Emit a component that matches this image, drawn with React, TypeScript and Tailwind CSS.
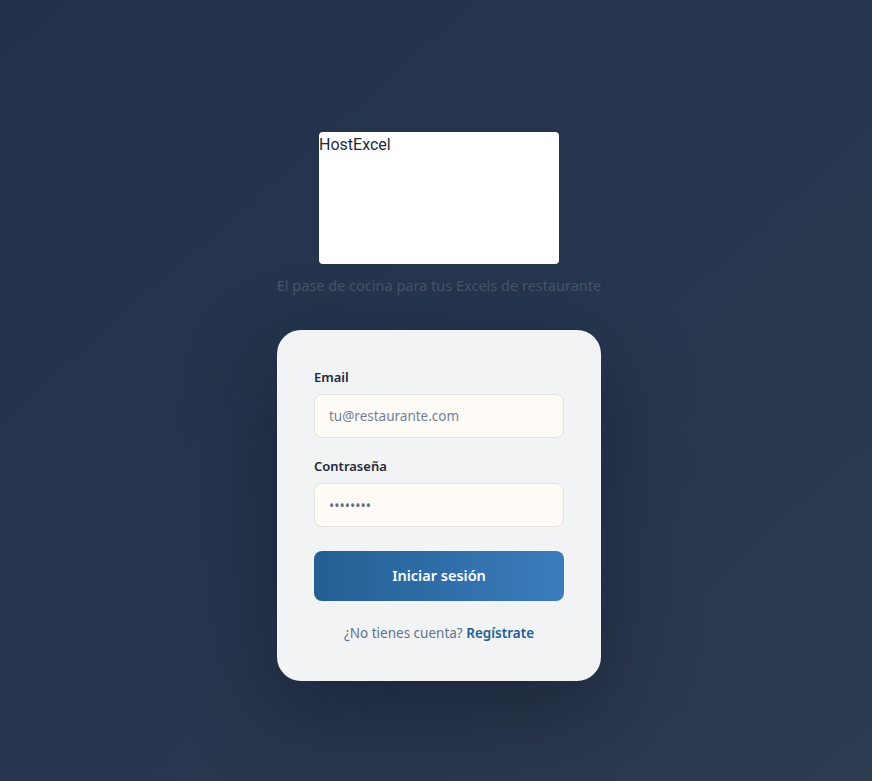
export default function App() {
  return (
    <div
      className="min-h-screen w-full bg-linear-to-br from-[#21324a] via-[#26364f] to-[#2e3a4e] flex flex-col items-center pt-[132px] pb-[100px] pl-[6px]"
      style={{ fontFamily: "'Noto Sans', Roboto, sans-serif" }}
    >
      {/* logo placeholder */}
      <div className="w-[240px] h-[132px] bg-white rounded-[4px] text-[16px] leading-[26px] text-[#1e293b] font-[Roboto,sans-serif]">
        HostExcel
      </div>
      <p className="mt-[11px] text-[14.5px] leading-5 text-[#475569]">
        El pase de cocina para tus Excels de restaurante
      </p>

      {/* login card */}
      <div className="mt-[35px] w-[324px] rounded-[24px] bg-[#f1f3f5] px-[37px] pt-[37px] pb-[38px] shadow-[0_30px_90px_rgba(10,18,30,0.45)]">
        <form className="flex flex-col" onSubmit={(e) => e.preventDefault()}>
          <label className="text-[13px] leading-5 font-semibold text-[#1e293b]">Email</label>
          <input
            type="email"
            placeholder="tu@restaurante.com"
            className="mt-[7px] h-[44px] w-full rounded-lg border border-[#e6e2dc] bg-[#fffcf7] px-[14px] text-[13.5px] text-[#1e293b] placeholder:text-[#718096] outline-none"
          />

          <label className="mt-[18px] text-[13px] leading-5 font-semibold text-[#1e293b]">Contraseña</label>
          <input
            type="password"
            placeholder="••••••••"
            className="mt-[7px] h-[44px] w-full rounded-lg border border-[#e6e2dc] bg-[#fffcf7] px-[14px] text-[14px] text-[#1e293b] placeholder:text-[#5f6f86] outline-none"
          />

          <button
            type="submit"
            className="mt-[24px] h-[50px] w-full rounded-lg bg-linear-to-r from-[#245f93] to-[#3a7cbc] text-[14.5px] font-semibold text-white"
          >
            Iniciar sesión
          </button>

          <p className="mt-[22px] text-center text-[13.5px] leading-5 text-[#64748b]">
            ¿No tienes cuenta?{" "}
            <a href="#" className="font-semibold text-[#245f93]">
              Regístrate
            </a>
          </p>
        </form>
      </div>
    </div>
  )
}
